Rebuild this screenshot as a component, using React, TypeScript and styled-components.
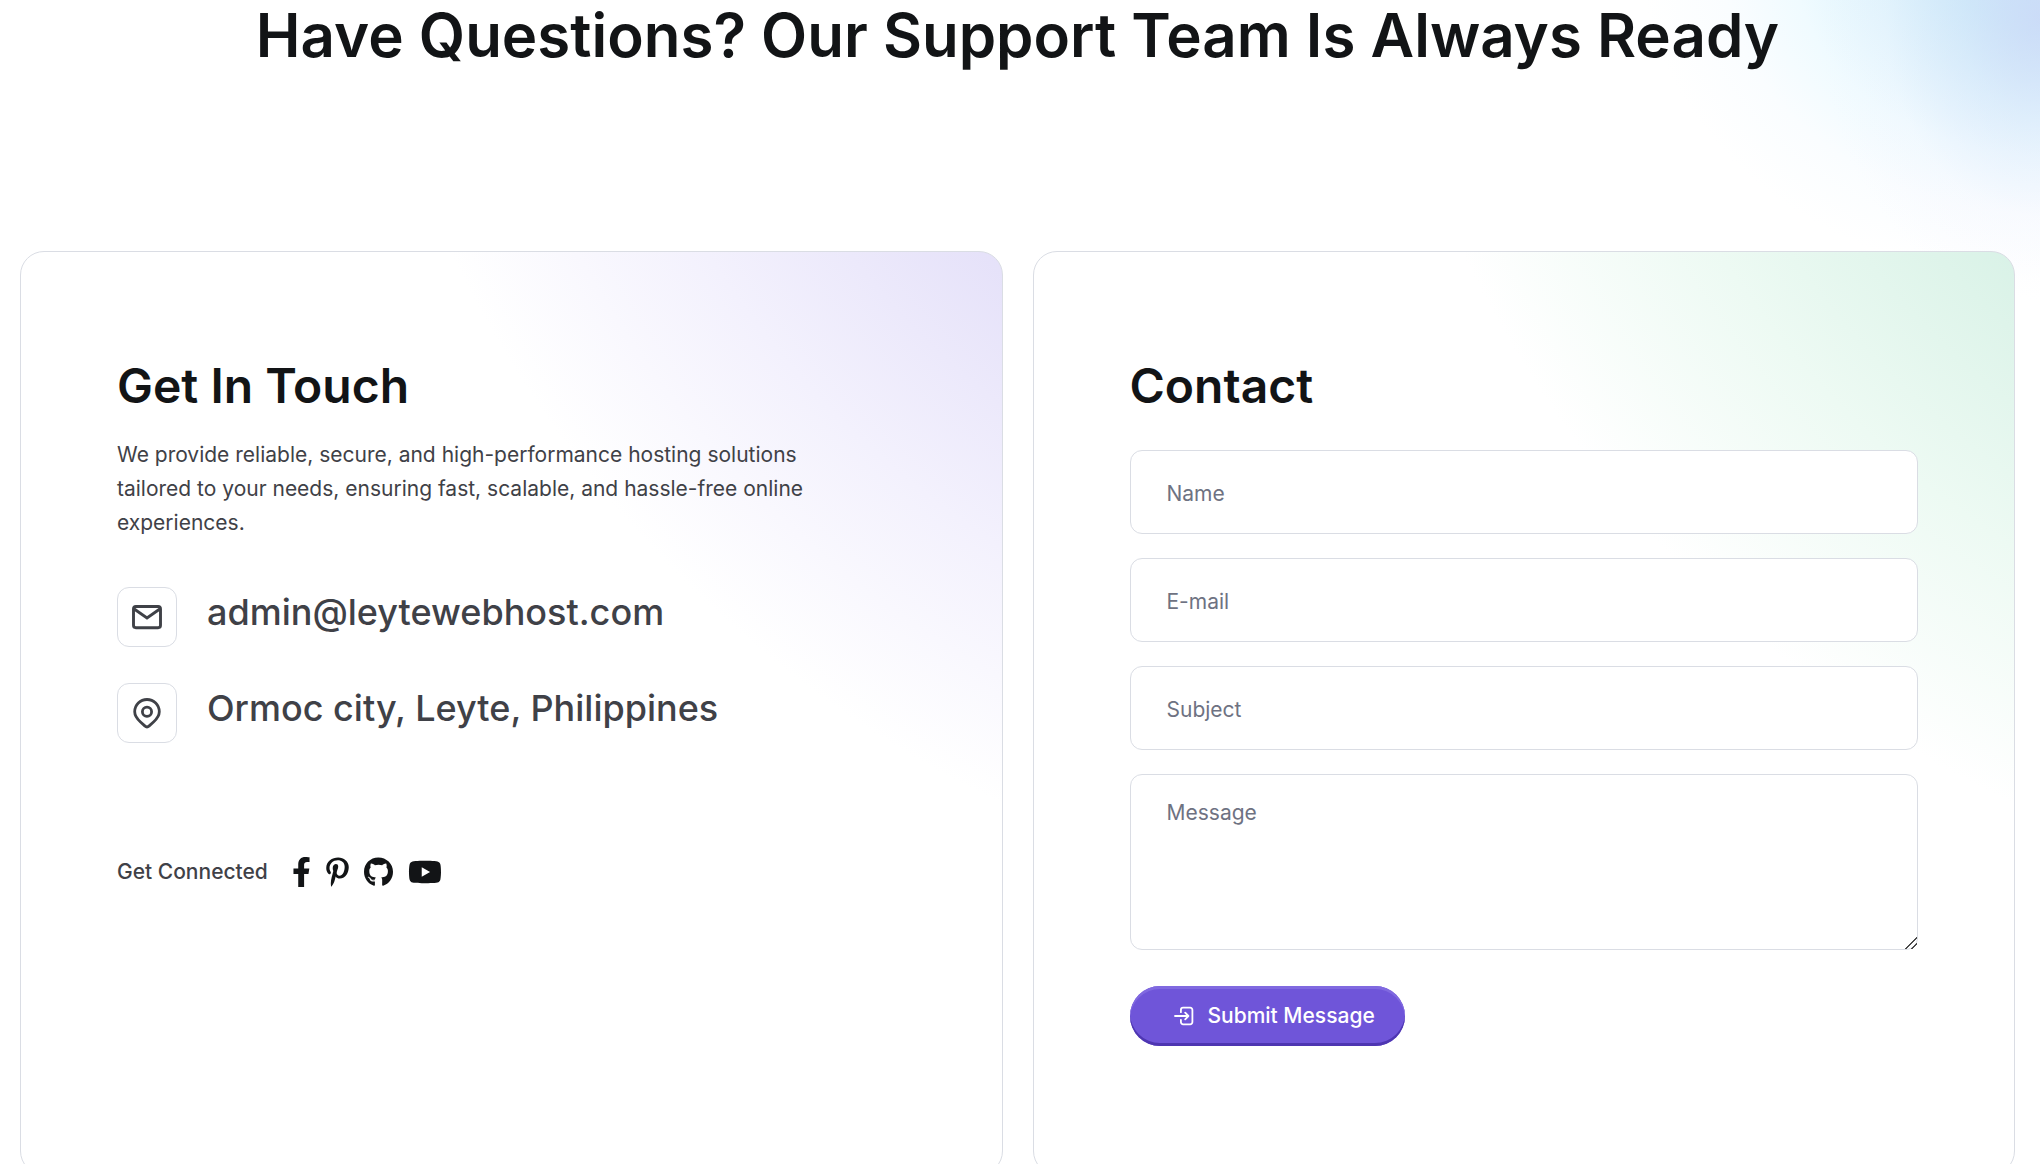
import React from "react";
import styled, { createGlobalStyle } from "styled-components";
import { FaFacebookF, FaPinterestP, FaGithub, FaYoutube } from "react-icons/fa";

const GlobalStyle = createGlobalStyle`
  * { box-sizing: border-box; }
  body {
    margin: 0;
    background: #fff;
    color: #3f4147;
    font-family: Inter, "Liberation Sans", sans-serif;
    font-size: 21px;
    line-height: 34px;
    overflow: hidden;
  }
`;

const Page = styled.main`
  display: flex;
  flex-direction: column;
  gap: 180px;
  padding: 0 25px 40px 20px;
  background:
    radial-gradient(
      220px 280px at 100% 20px,
      rgba(203, 214, 247, 0.7) 0%,
      rgba(210, 224, 249, 0.4) 35%,
      rgba(240, 240, 253, 0.2) 70%,
      rgba(255, 255, 255, 0) 100%
    ),
    radial-gradient(
      400px 330px at 100% -50px,
      #c3e3f9 0%,
      #cdecf9 24%,
      #e2f5fd 46%,
      #f0fbff 62%,
      #fafdff 80%,
      #fff 100%
    );
`;

const Title = styled.h1`
  margin: 0;
  color: #121416;
  font-size: 60px;
  font-weight: 600;
  line-height: 71px;
  text-align: center;
`;

const Columns = styled.div`
  display: grid;
  grid-template-columns: 1fr 1fr;
  gap: 30px;
`;

const tints = {
  violet: ["#e5e1f9", "#f3f1fd"],
  green: ["#d9f2e7", "#edfaf3"],
};

const Card = styled.section<{ $tint: keyof typeof tints }>`
  padding: 96px;
  padding-bottom: 128px;
  border: 1px solid #dadde4;
  border-radius: 24px;
  background: #fff
    radial-gradient(
      circle at calc(100% + 500px) -500px,
      ${(p) => tints[p.$tint][0]} 707px,
      ${(p) => tints[p.$tint][1]} 940px,
      #fff 1165px
    );
`;

const CardTitle = styled.h2`
  margin: 0;
  padding-top: 8px;
  color: #121416;
  font-size: 48px;
  font-weight: 600;
  line-height: 60px;
`;

const Intro = styled.p`
  max-width: 700px;
  margin: 22px 0 47px;
`;

const ContactList = styled.ul`
  display: grid;
  gap: 36px;
  margin: 0 0 112px;
  padding: 0;
  list-style: none;
`;

const ContactItem = styled.li`
  display: flex;
  gap: 30px;
`;

const IconBox = styled.span`
  display: flex;
  align-items: center;
  justify-content: center;
  width: 60px;
  height: 60px;
  border: 1px solid #dadde4;
  border-radius: 12px;
  background: #fff;
`;

const ContactText = styled.span`
  font-size: 36px;
  font-weight: 500;
  line-height: 50px;
`;

const MailLink = styled.a`
  color: inherit;
  text-decoration: none;
`;

const Connect = styled.div`
  display: flex;
  align-items: center;
  gap: 24px;
  font-weight: 500;
`;

const Socials = styled.nav`
  display: flex;
  gap: 15px;
`;

const Social = styled.a<{ $width: number }>`
  display: flex;
  color: #121416;
  svg {
    width: ${(p) => p.$width}px;
    height: 30px;
  }
`;

const Form = styled.form`
  display: grid;
  gap: 24px;
  margin-top: 34px;
`;

const Field = styled.input`
  width: 100%;
  height: 84px;
  padding: 2px 36px 0;
  border: 1px solid #dadde4;
  border-radius: 12px;
  background: #fff;
  color: #3f4147;
  font: inherit;
  &::placeholder { color: #6e7282; opacity: 1; }
`;

const Message = styled(Field).attrs({ as: "textarea" })`
  display: block;
  height: 176px;
  padding-top: 21px;
  resize: vertical;
  &::-webkit-resizer {
    background: linear-gradient(
      135deg,
      transparent 58%,
      #4a4a4a 60%,
      #4a4a4a 64%,
      transparent 66%,
      transparent 78%,
      #4a4a4a 80%,
      #4a4a4a 84%,
      transparent 86%
    );
  }
`;

const Submit = styled.button`
  display: flex;
  align-items: center;
  justify-self: start;
  gap: 14px;
  height: 60px;
  margin-top: 12px;
  padding: 0 30px 0 44px;
  border: 0;
  border-radius: 30px;
  background: #6f55d9;
  box-shadow: inset 0 3px 0 #8069e0, inset 0 -3px 0 #4e36b1;
  color: #fff;
  font: inherit;
  font-weight: 500;
`;

const stroke = {
  fill: "none",
  stroke: "currentColor",
  strokeLinecap: "round",
  strokeLinejoin: "round",
} as const;

const MailIcon = () => (
  <svg width="30" height="30" viewBox="0 0 30 30" aria-hidden="true" {...stroke} strokeWidth="2.9">
    <rect x="1.5" y="4.5" width="27" height="21.2" rx="2.4" />
    <path d="M2.2 7 15 15.9 27.8 7" strokeLinejoin="miter" />
  </svg>
);

const PinIcon = () => (
  <svg width="32" height="32" viewBox="0 0 32 32" aria-hidden="true" {...stroke} strokeWidth="2.8">
    <path d="M3.7 14.8a12.3 12.3 0 0 1 24.6 0c0 4.6-2.6 7.3-5.8 10.2l-4.3 3.9c-1.3 1.2-3.1 1.2-4.4 0L9.5 25c-3.2-2.9-5.8-5.6-5.8-10.2Z" />
    <circle cx="16" cy="14.8" r="4.6" />
  </svg>
);

const EnterIcon = () => (
  <svg width="20" height="20" viewBox="0 0 20 20" aria-hidden="true" {...stroke} strokeWidth="1.8">
    <path d="M6.9 6.2V3.9a2.2 2.2 0 0 1 2.2-2.2h7.1a2.2 2.2 0 0 1 2.2 2.2v12.2a2.2 2.2 0 0 1-2.2 2.2H9.1a2.2 2.2 0 0 1-2.2-2.2v-2.3" />
    <path d="M1 10h13.3M11.2 6.7l3.2 3.3-3.2 3.3" />
  </svg>
);

const socials = [
  { name: "Facebook", Icon: FaFacebookF, width: 19 },
  { name: "Pinterest", Icon: FaPinterestP, width: 23 },
  { name: "GitHub", Icon: FaGithub, width: 29 },
  { name: "YouTube", Icon: FaYoutube, width: 34 },
];

export default function App() {
  return (
    <>
      <GlobalStyle />
      <Page>
        <Title>Have Questions? Our Support Team Is Always Ready</Title>
        <Columns>
          <Card $tint="violet">
            <CardTitle>Get In Touch</CardTitle>
            <Intro>
              We provide reliable, secure, and high-performance hosting solutions tailored to your
              needs, ensuring fast, scalable, and hassle-free online experiences.
            </Intro>
            <ContactList>
              <ContactItem>
                <IconBox><MailIcon /></IconBox>
                <ContactText>
                  <MailLink href="mailto:admin@leytewebhost.com">admin@leytewebhost.com</MailLink>
                </ContactText>
              </ContactItem>
              <ContactItem>
                <IconBox><PinIcon /></IconBox>
                <ContactText>Ormoc city, Leyte, Philippines</ContactText>
              </ContactItem>
            </ContactList>
            <Connect>
              Get Connected
              <Socials>
                {socials.map(({ name, Icon, width }) => (
                  <Social key={name} href="#" aria-label={name} $width={width}><Icon /></Social>
                ))}
              </Socials>
            </Connect>
          </Card>
          <Card $tint="green">
            <CardTitle>Contact</CardTitle>
            <Form onSubmit={(e) => e.preventDefault()}>
              <Field type="text" aria-label="Name" placeholder="Name" />
              <Field type="email" aria-label="E-mail" placeholder="E-mail" />
              <Field type="text" aria-label="Subject" placeholder="Subject" />
              <Message aria-label="Message" placeholder="Message" />
              <Submit type="submit">
                <EnterIcon />
                Submit Message
              </Submit>
            </Form>
          </Card>
        </Columns>
      </Page>
    </>
  );
}
